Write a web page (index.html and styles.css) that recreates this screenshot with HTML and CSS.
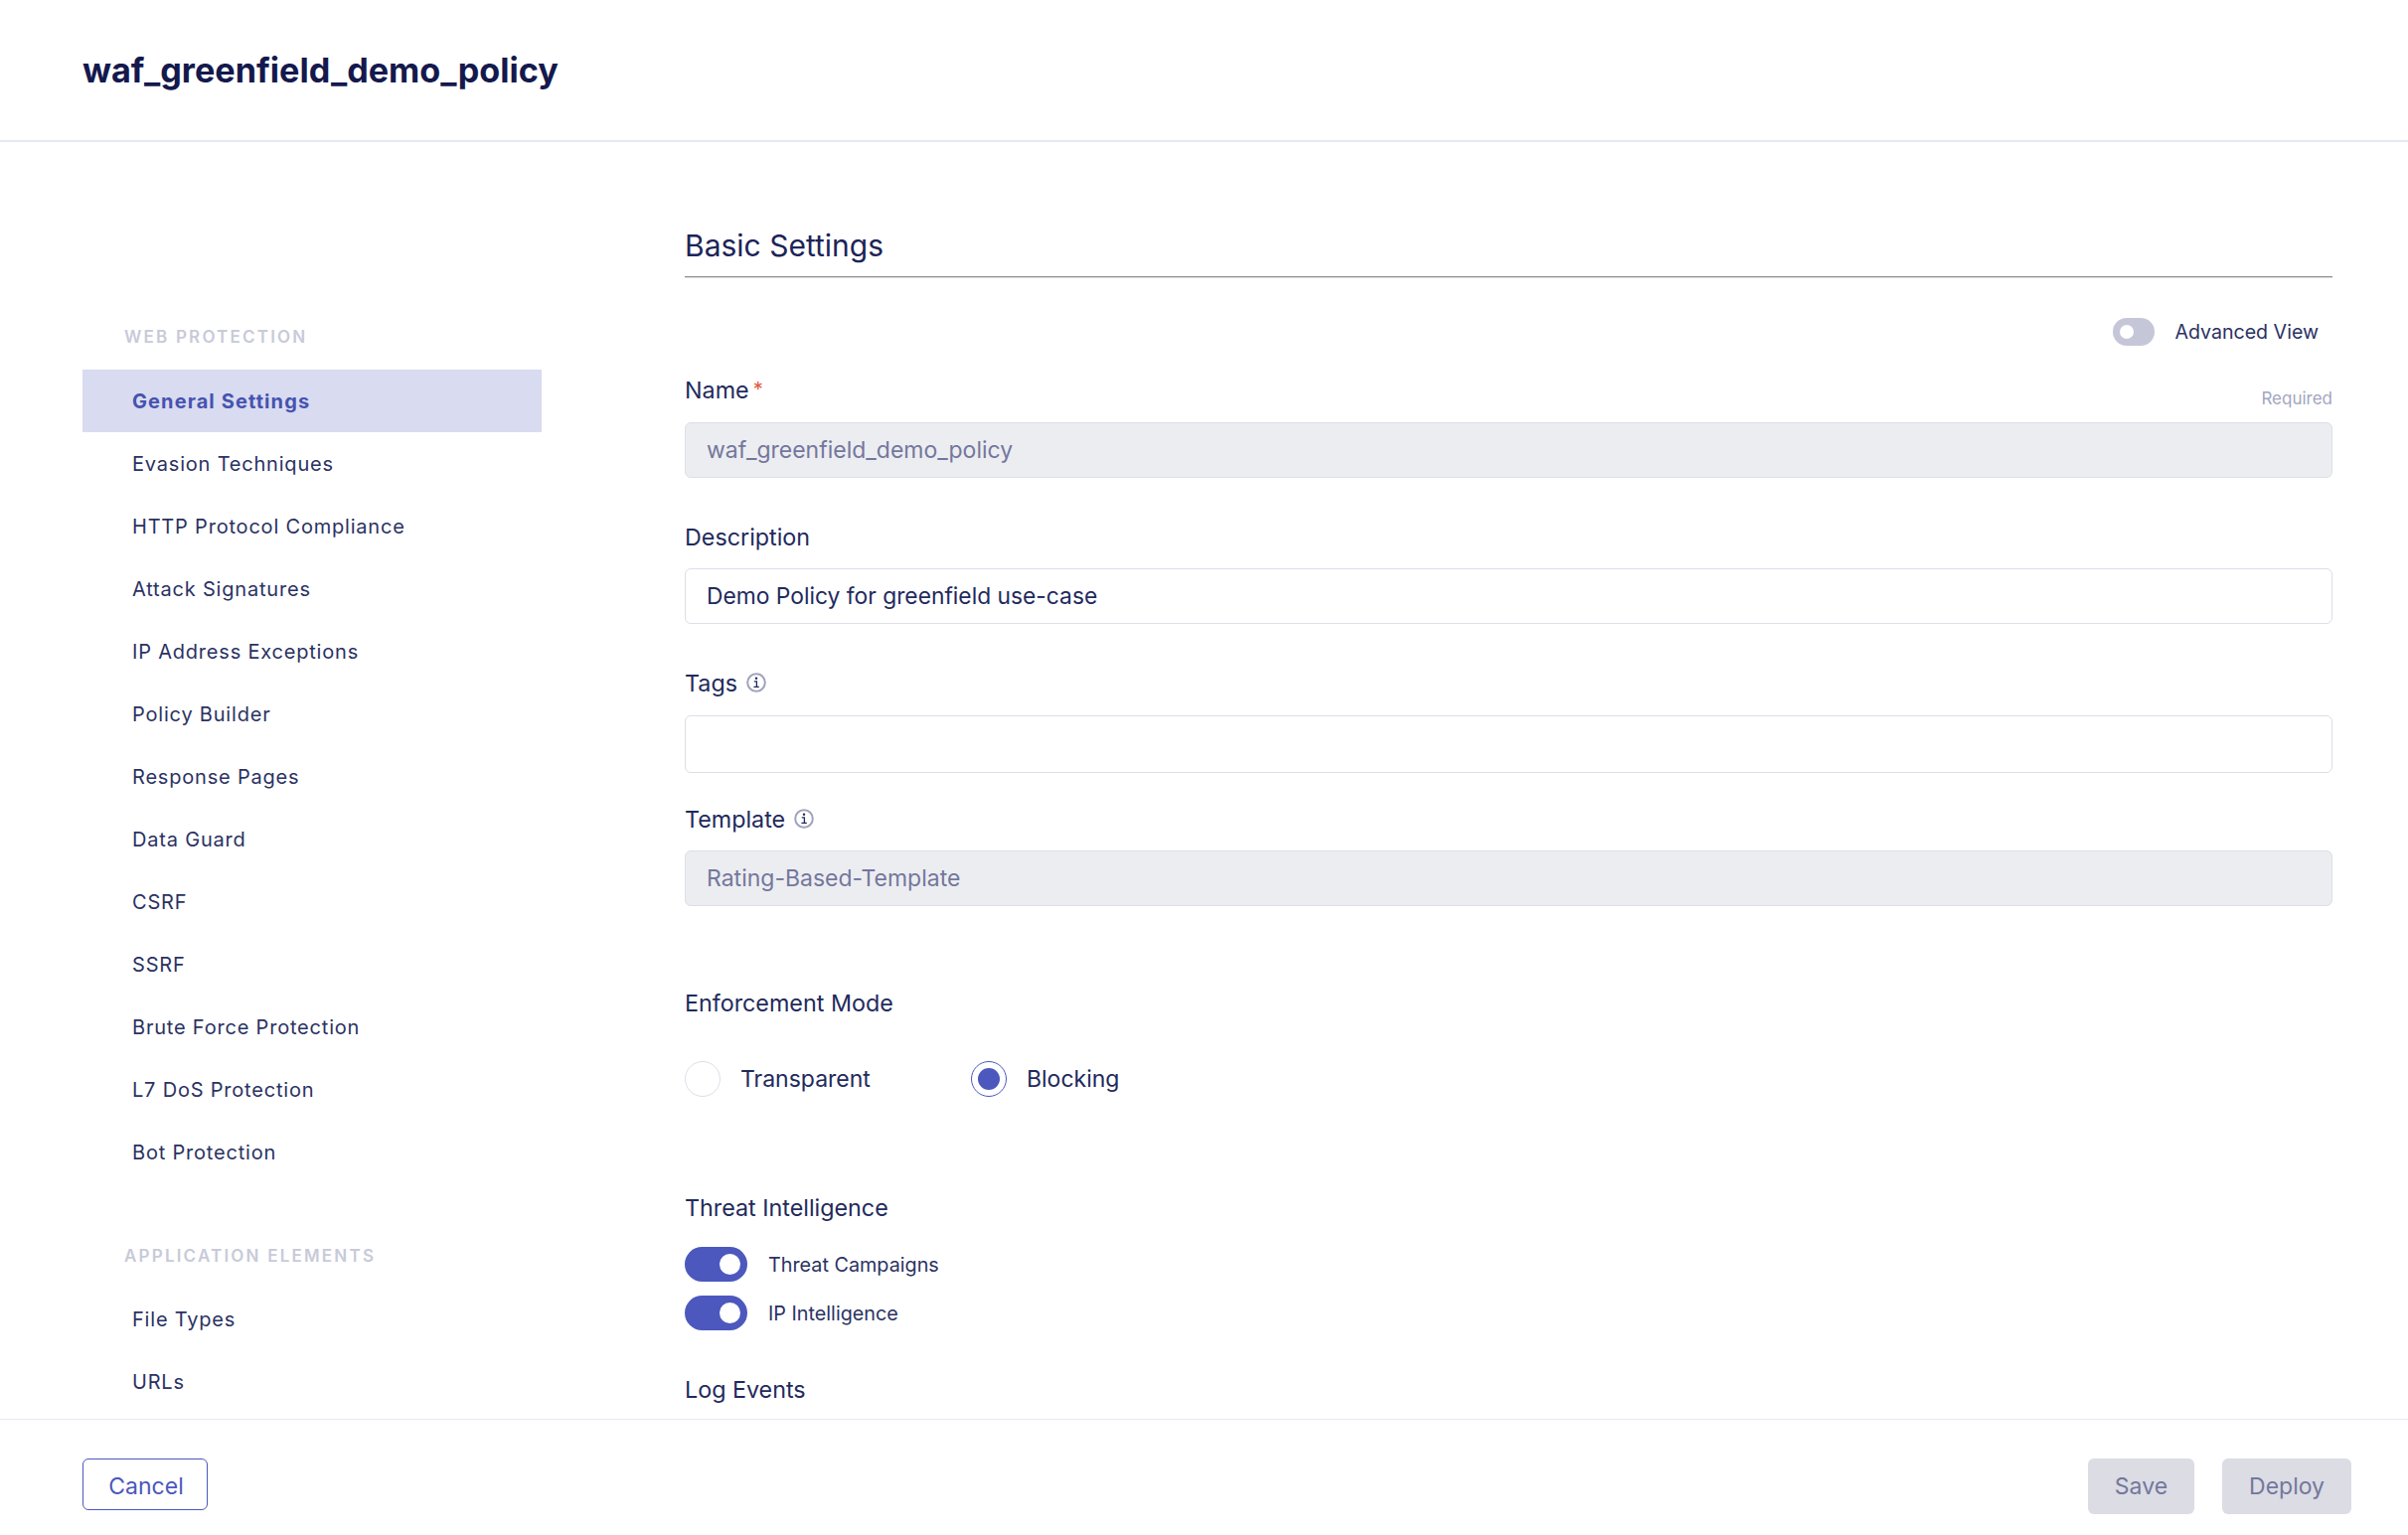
FILE: index.html
```html
<!DOCTYPE html>
<html lang="en">
<head>
  <meta charset="utf8">
  <title>waf_greenfield_demo_policy</title>
  <link rel="stylesheet" href="styles.css">
</head>
<body>
  <header class="top">
    <h1>waf_greenfield_demo_policy</h1>
  </header>

  <div class="content">
    <nav class="side">
      <h2>WEB PROTECTION</h2>
      <ul>
        <li class="active">General Settings</li>
        <li>Evasion Techniques</li>
        <li>HTTP Protocol Compliance</li>
        <li>Attack Signatures</li>
        <li>IP Address Exceptions</li>
        <li>Policy Builder</li>
        <li>Response Pages</li>
        <li>Data Guard</li>
        <li>CSRF</li>
        <li>SSRF</li>
        <li>Brute Force Protection</li>
        <li>L7 DoS Protection</li>
        <li>Bot Protection</li>
      </ul>
      <h2 class="second">APPLICATION ELEMENTS</h2>
      <ul>
        <li>File Types</li>
        <li>URLs</li>
      </ul>
    </nav>

    <main class="form">
      <h3 class="title">Basic Settings</h3>

      <div class="advanced">
        <span class="switch small"><i></i></span>
        <span>Advanced View</span>
      </div>

      <div class="label-row name-row">
        <label>Name<span class="star">*</span></label>
        <small>Required</small>
      </div>
      <div class="field disabled">waf_greenfield_demo_policy</div>

      <label class="desc-label">Description</label>
      <div class="field">Demo Policy for greenfield use-case</div>

      <label class="tags-label">Tags
        <svg class="info" viewBox="0 0 20 20"><circle cx="10" cy="10" r="8.8"/><circle class="dot" cx="10" cy="5.8" r="1.2"/><path class="stem" d="M7.8 8.8h2.6v5.4M7.4 14.4h5.4"/></svg>
      </label>
      <div class="field tall"></div>

      <label class="template-label">Template
        <svg class="info" viewBox="0 0 20 20"><circle cx="10" cy="10" r="8.8"/><circle class="dot" cx="10" cy="5.8" r="1.2"/><path class="stem" d="M7.8 8.8h2.6v5.4M7.4 14.4h5.4"/></svg>
      </label>
      <div class="field disabled">Rating-Based-Template</div>

      <label class="enforce-label">Enforcement Mode</label>
      <div class="radios">
        <span class="radio"></span><span class="radio-text">Transparent</span>
        <span class="radio on"></span><span class="radio-text">Blocking</span>
      </div>

      <label class="threat-label">Threat Intelligence</label>
      <div class="toggle-row"><span class="switch"><i></i></span><span>Threat Campaigns</span></div>
      <div class="toggle-row"><span class="switch"><i></i></span><span>IP Intelligence</span></div>

      <label class="log-label">Log Events</label>
    </main>
  </div>

  <footer class="bottom">
    <button class="btn cancel">Cancel</button>
    <div class="actions">
      <button class="btn grey">Save</button>
      <button class="btn grey">Deploy</button>
    </div>
  </footer>
</body>
</html>
```

FILE: styles.css
```css
* { box-sizing: border-box; font-family: Inter, "Liberation Sans", sans-serif; }
html, body { height: 100%; }
body { margin: 0; display: flex; flex-direction: column; height: 100vh; overflow: hidden; color: #222a5c; background: #fff; }

.top { height: 143px; flex: none; border-bottom: 2px solid #e6e9f5; padding: 0 83px; display: flex; align-items: center; }
.top h1 { margin: 0; font-size: 34.2px; font-weight: 700; color: #14194d; }

.content { flex: 1; min-height: 0; display: flex; overflow: hidden; }

.side { width: 462px; margin-left: 83px; flex: none; padding-top: 185px; }
.side h2 { margin: 0 0 21px; padding-left: 42px; font-size: 17px; line-height: 23px; font-weight: 600; letter-spacing: 2.2px; color: #c8cad9; }
.side h2.second { margin: 62px 0 20px; }
.side ul { margin: 0; padding: 0; list-style: none; }
.side li { height: 63px; line-height: 65px; padding-left: 50px; font-size: 20px; letter-spacing: 0.8px; color: #2b3263; }
.side li.active { background: #d9dbf0; color: #4653b0; font-weight: 700; letter-spacing: 1.1px; }

.form { flex: 1; min-width: 0; margin-left: 144px; margin-right: 76px; padding-top: 84px; }
.form label { display: block; font-size: 23.3px; line-height: 30px; color: #222a5c; }

.title { margin: 0; height: 52px; line-height: 40px; font-size: 30px; font-weight: 400; color: #1c2458; border-bottom: 1px solid #919191; box-shadow: 0 1px 0 #dcdcdc; }

.advanced { display: flex; align-items: center; justify-content: flex-end; gap: 20px; height: 28px; margin-top: 41px; padding-right: 14px; font-size: 19.6px; color: #2b3263; }

.label-row { display: flex; justify-content: space-between; align-items: flex-end; }
.name-row { margin-top: 30px; margin-bottom: 15px; }
.name-row label { margin-bottom: 2px; }
.label-row small { font-size: 17px; line-height: 18px; color: #a3a6bf; }
.star { color: #e2583e; margin-left: 4px; vertical-align: 2px; font-size: 20px; line-height: 1; }

.field { height: 56px; line-height: 54px; padding: 0 21px; border: 1px solid #dddfe8; border-radius: 6px; font-size: 22.8px; color: #222a5c; background: #fff; }
.field.tall { height: 58px; }
.field.disabled { background: #ecedf1; color: #74779c; font-size: 23px; }

.desc-label { margin: 45px 0 16px; }
.tags-label { margin: 45px 0 17px; display: block; }
.template-label { margin: 32px 0 16px; }
.enforce-label { margin: 83px 0 43px; }
.threat-label { margin: 97px 0 24px; }
.log-label { margin-top: 45px; }

.info { width: 20px; height: 20px; margin-left: 2px; vertical-align: -1px; fill: none; stroke: #a0a2bd; stroke-width: 2; }
.info .dot { fill: #222a5c; stroke: none; }
.info .stem { stroke: #222a5c; stroke-width: 1.3; }

.radios { display: flex; align-items: center; height: 36px; font-size: 23px; line-height: 37px; color: #222a5c; }
.radio { width: 36px; height: 36px; flex: none; border: 1px solid #dddfe8; border-radius: 50%; background: #fff; display: flex; align-items: center; justify-content: center; }
.radio.on { border: 1.5px solid #4c58bd; }
.radio.on::after { content: ""; width: 22px; height: 22px; border-radius: 50%; background: #4c58bd; }
.radio-text { margin-left: 20px; width: 232px; }

.toggle-row { display: flex; align-items: center; gap: 21px; height: 35px; margin-bottom: 14px; font-size: 19.8px; color: #2b3263; }
.toggle-row:last-of-type { margin-bottom: 0; }
.switch { width: 63px; height: 35px; flex: none; border-radius: 18px; background: #4c58bd; display: flex; align-items: center; justify-content: flex-end; padding-right: 7px; }
.switch i { width: 21px; height: 21px; border-radius: 50%; background: #fff; }
.switch.small { width: 42px; height: 28px; border-radius: 14px; background: #c5c7d8; justify-content: flex-start; padding: 0 0 0 7px; }
.switch.small i { width: 14px; height: 14px; }

.bottom { height: 117px; flex: none; border-top: 1px solid #e6e9f5; padding: 39px 57px 0 83px; display: flex; justify-content: space-between; align-items: flex-start; }
.actions { display: flex; gap: 28px; }
.btn { font-size: 23px; border-radius: 6px; border: 0; cursor: pointer; }
.cancel { width: 126px; height: 52px; background: #fff; border: 1px solid #4c58bd; color: #4c58bd; padding: 3px 0 0 2px; }
.grey { height: 56px; padding: 0 27px; background: #dbdce4; color: #74779c; }
```
